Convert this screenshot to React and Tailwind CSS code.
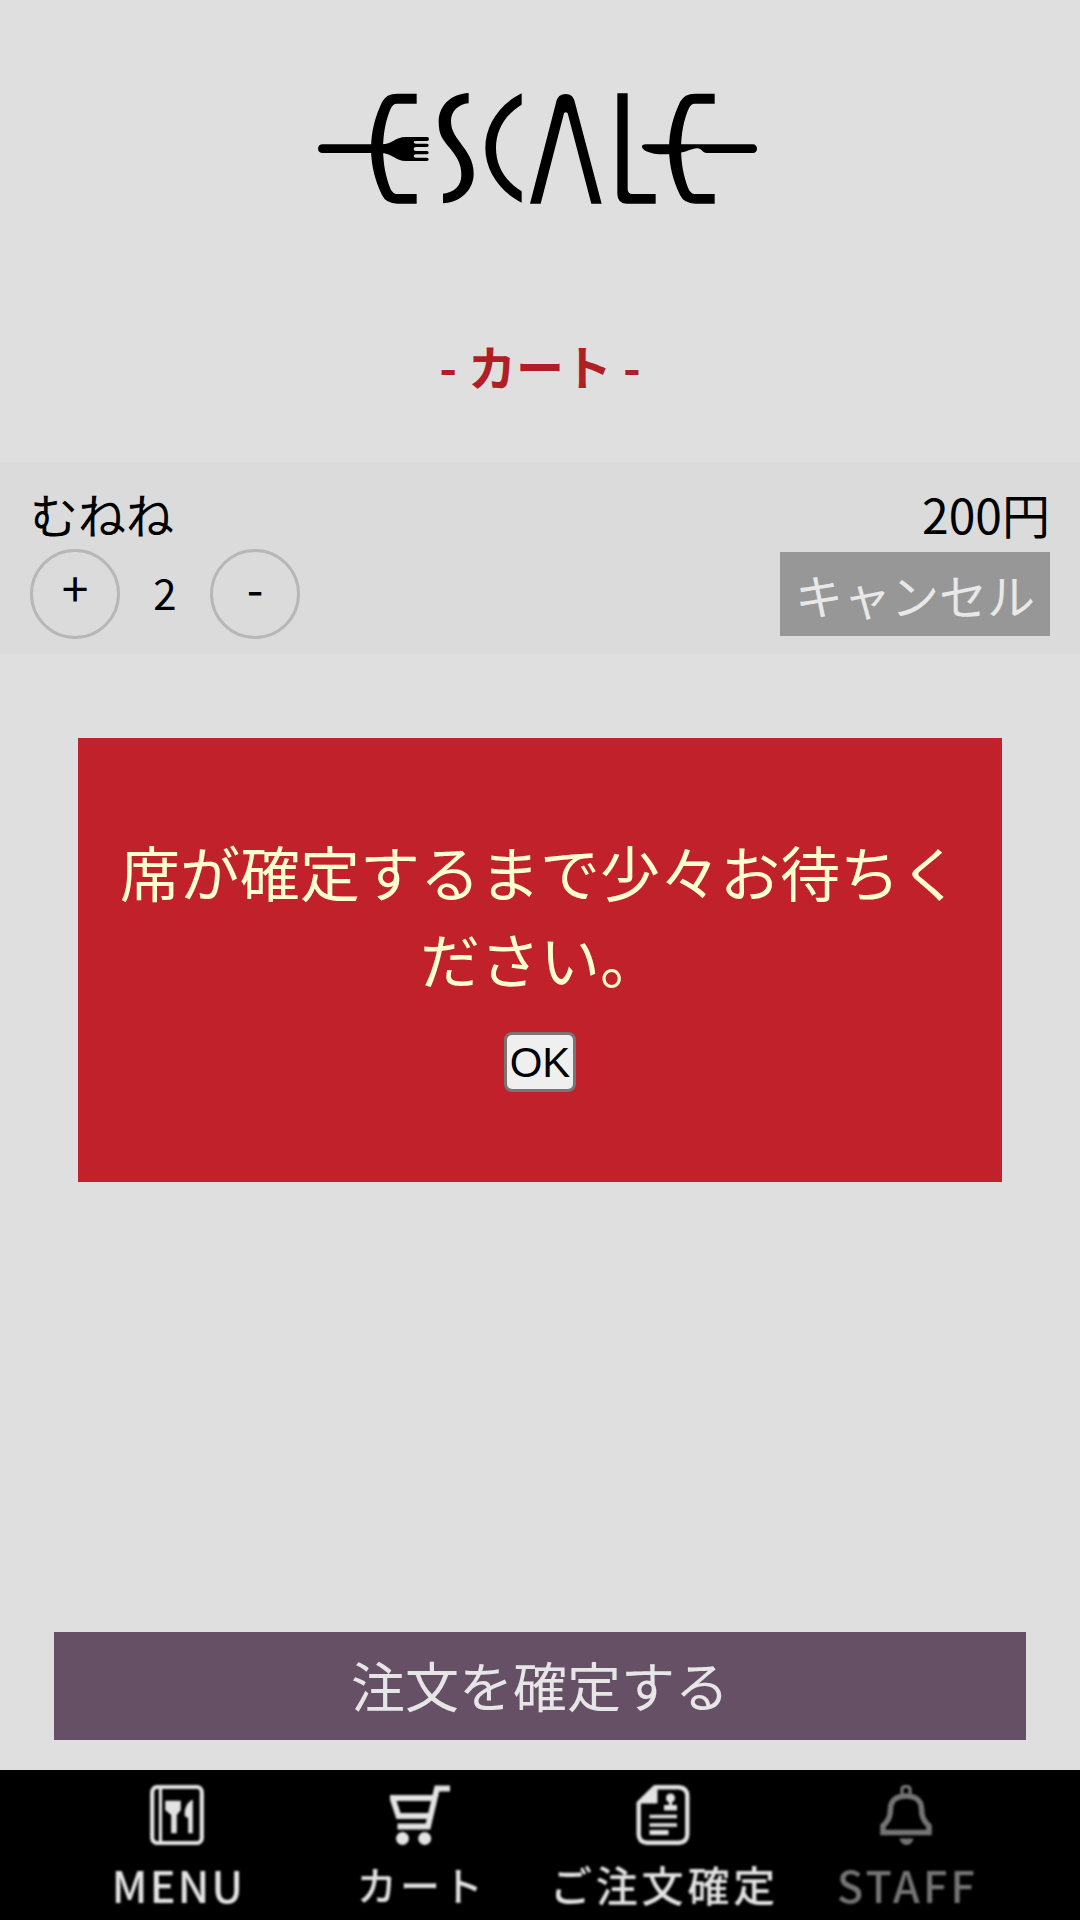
import React from "react";

const LETTER_E =
  "M350 41H292Q258 41 246 66C226 110 214 150 213 206C214 262 226 302 246 345Q258 371 292 371H350V342H290Q279 342 272 328C257 290 250 255 249 206C250 160 257 120 272 86Q279 71 290 71H350Z";

function Logo() {
  return (
    <svg className="h-[140px] w-[460px]" viewBox="0 0 1380 420" role="img" aria-label="ESCALE">
      <path d={LETTER_E} />
      <rect x="54" y="193" width="200" height="26" rx="13" />
      <path d="M240 193C278 195 282 171 318 171H381a6 6 0 0 1 0 12H348Q341 183 341 187T348 191H381a5 5 0 0 1 0 10H348Q341 201 341 207T348 213H381a5 5 0 0 1 0 10H348Q341 223 341 228T348 233H381a5 5 0 0 1 0 10H318C285 243 278 219 240 219Z" />
      <path d="M506 39C450 42 416 80 416 125C416 165 428 178 450 205C475 237 484 255 484 285C484 318 462 338 429 341V370C480 368 521 330 521 282C521 240 500 215 482 190C462 162 453 148 453 122C453 95 475 72 506 70Z" />
      <path d="M665 40C600 72 556 135 556 204C556 273 600 335 665 368V334C615 303 588 258 588 204C588 150 615 104 665 74Z" />
      <g transform="translate(690 0)">
        <path d="M0 371L78 68C82 50 92 42 107 42C122 42 131 50 135 68L215 371H184L113 100Q107 93 102 100L32 371Z" />
        <path d="M262 40H293V326Q293 342 308 342H377V371H292Q262 371 262 341Z" />
        <path d="M336 200Q336 193 348 193H669a12 13 0 0 1 0 26H530C518 219 514 205 503 205C480 205 470 222 400 223C360 223 336 210 336 200Z" />
      </g>
      <path d={LETTER_E} transform="translate(894 0)" />
    </svg>
  );
}

function MenuIcon() {
  return (
    <svg className="h-[60px] w-[54px]" viewBox="0 0 54 60" fill="none" stroke="currentColor">
      <rect x="2.200" y="2" width="49.600" height="56" rx="5" strokeWidth="4.200" />
      <path d="M10.500 2V58" strokeWidth="3.200" />
      <path
        d="M15.500 16H30.500V25L26.500 30V48H21.500V30L15.500 25ZM42.500 15V48H38.500V33L35 31V26Q37 17 42.500 15Z"
        fill="currentColor"
        stroke="currentColor"
        strokeWidth="0.6"
      />
    </svg>
  );
}

function CartIcon() {
  return (
    <svg className="h-[60px] w-[60px]" viewBox="0 0 60 60" fill="none" stroke="currentColor">
      <path d="M60 3.500H47L38 41.500H7.500M44 13H2.500L8.500 31H39" strokeWidth="5.800" />
      <circle cx="12.500" cy="53.500" r="6.500" fill="currentColor" stroke="none" />
      <circle cx="34.700" cy="53.500" r="6.500" fill="currentColor" stroke="none" />
    </svg>
  );
}

function OrderIcon() {
  return (
    <svg className="h-[60px] w-[54px]" viewBox="0 0 54 60" fill="none" stroke="currentColor">
      <path
        d="M19 2.200H43Q51.300 3 51.300 11V49Q51.300 57 43 57.800H11Q2.700 57 2.700 49V18Z"
        strokeWidth="4.400"
        strokeLinejoin="round"
      />
      <path d="M19 2H21V18H2.500Z" fill="currentColor" strokeWidth="1" />
      <circle cx="34.500" cy="13" r="4.500" fill="currentColor" stroke="none" />
      <path d="M33 15H36V20H41V25.500H28V20H33Z" fill="currentColor" stroke="none" />
      <path d="M13.500 31.500H41M13.500 40H41" strokeWidth="3.600" />
      <path d="M13.500 47.500H32.500" strokeWidth="5" />
    </svg>
  );
}

function BellIcon() {
  return (
    <svg className="h-[60px] w-[54px]" viewBox="0 0 54 60" fill="none" stroke="currentColor">
      <path
        d="M4 47.500V41C9 36 11.500 32 11.500 24C11.500 15 18 11 27 11S42.500 15 42.500 24C42.500 32 45 36 50 41V47.500Z"
        strokeWidth="5.600"
      />
      <path d="M23 10V4Q23 1.500 27 1.500T31 4V10" strokeWidth="3.200" />
      <path d="M20.500 53.500H34.500Q33 60 27.500 60T20.500 53.500Z" fill="currentColor" stroke="none" />
    </svg>
  );
}

const NAV = [
  { label: "MENU", Icon: MenuIcon, tone: "text-[#e3e3e3]", type: "text-[43px] tracking-[2.2px] pl-[4px]" },
  { label: "カート", Icon: CartIcon, tone: "text-[#e3e3e3]", type: "text-[40px] tracking-[3.2px] pl-[4px]" },
  { label: "ご注文確定", Icon: OrderIcon, tone: "text-[#e3e3e3]", type: "text-[42px] tracking-[3.8px] pl-[4px]" },
  { label: "STAFF", Icon: BellIcon, tone: "text-[#747474]", type: "text-[43px] tracking-[3.2px] pl-[4px]" },
];

function RoundButton({ children }) {
  return (
    <button className="flex size-[90px] items-center justify-center rounded-full border-[3px] border-[#b7b7b7] pb-[17px] text-[48px] leading-none">
      {children}
    </button>
  );
}

export default function App() {
  return (
    <div className="flex h-[1920px] w-[1080px] flex-col bg-[#dfdfdf] font-['Noto_Sans_CJK_JP',sans-serif] text-black">
      <header className="flex h-[462px] flex-col pt-[80px]">
        <div className="pl-[300px]">
          <Logo />
        </div>
        <h1 className="mt-[110px] text-center text-[48px] leading-[70px] font-bold text-[#b01e26]">- カート -</h1>
      </header>

      <section className="flex h-[192px] justify-between bg-[#dbdbdb] px-[30px] pt-[15px]">
        <div className="flex flex-col">
          <p className="h-[72px] text-[48px] leading-[72px]">むねね</p>
          <div className="flex items-center">
            <RoundButton>+</RoundButton>
            <span className="w-[90px] pb-[5px] text-center text-[42px] leading-[60px]">2</span>
            <RoundButton>-</RoundButton>
          </div>
        </div>
        <div className="flex flex-col items-end">
          <p className="h-[75px] text-[48px] leading-[72px]">200円</p>
          <button className="h-[84px] w-[270px] bg-[#979797] text-[48px] leading-[84px] text-[#e8e8e8]">キャンセル</button>
        </div>
      </section>

      <div
        role="dialog"
        className="mx-[78px] mt-[84px] flex h-[444px] flex-col items-center bg-[#c1212a] px-[30px] pt-[89px] text-center text-[60px] leading-[87px] text-[#ffffd0]"
      >
        <p>席が確定するまで少々お待ちください。</p>
        <button className="mt-[31px] h-[60px] w-[72px] rounded-[8px] border-[3px] border-[#767676] bg-[#efefef] pt-px font-['Liberation_Sans',sans-serif] text-[42px] leading-[53px] text-black">
          OK
        </button>
      </div>

      <button className="mx-[54px] mt-auto mb-[30px] h-[108px] shrink-0 bg-[#665065] pb-[3px] text-[54px] leading-[78px] text-[#e6e6e6]">
        注文を確定する
      </button>

      <nav className="grid h-[150px] shrink-0 grid-cols-4 bg-black pr-[54px] pl-[54px]">
        {NAV.map(({ label, Icon, tone, type }) => (
          <a key={label} className={`flex flex-col items-center pt-[15px] pl-[2px] whitespace-nowrap blur-[0.9px] ${tone}`}>
            <Icon />
            <span className={`mt-[8px] leading-[62px] font-medium ${type}`}>{label}</span>
          </a>
        ))}
      </nav>
    </div>
  );
}
